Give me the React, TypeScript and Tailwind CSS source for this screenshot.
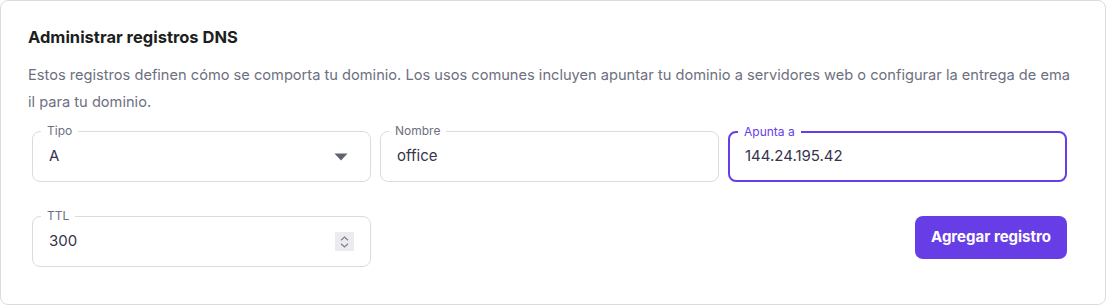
import type { ReactNode } from "react";

type FieldProps = {
  label: string;
  focused?: boolean;
  children: ReactNode;
};

function Field({ label, focused, children }: FieldProps) {
  return (
    <div
      className={`relative flex h-[51px] items-center rounded-lg bg-white ${
        focused ? "border-2 border-[#673de6] pl-[15px] pr-[15px]" : "border border-[#dadce2] pl-4 pr-4"
      }`}
    >
      <span
        className={`absolute left-[8px] top-[-9px] bg-white px-[6px] text-[12px] leading-[16px] ${
          focused ? "text-[#673de6]" : "text-[#6d7081]"
        }`}
      >
        {label}
      </span>
      {children}
    </div>
  );
}

function CaretDown() {
  return (
    <svg width="14" height="8" viewBox="0 0 14 8" className="shrink-0">
      <path d="M0.5 0.5h13L7 7.5z" fill="#5f6270" />
    </svg>
  );
}

function Spinner() {
  return (
    <div className="flex h-[19px] w-[19px] shrink-0 flex-col items-center justify-center gap-[2px] bg-[#ececf0]">
      <svg width="9" height="5" viewBox="0 0 9 5">
        <path d="M1 4.2L4.5 1 8 4.2" fill="none" stroke="#7c7f8c" strokeWidth="1.2" />
      </svg>
      <svg width="9" height="5" viewBox="0 0 9 5">
        <path d="M1 0.8L4.5 4 8 0.8" fill="none" stroke="#7c7f8c" strokeWidth="1.2" />
      </svg>
    </div>
  );
}

export default function App() {
  return (
    <div
      className="h-[305px] w-[1106px] bg-white"
      style={{ fontFamily: "Inter, 'Noto Sans', sans-serif" }}
    >
      <div className="h-full w-full rounded-lg border border-[#dadce0] px-[27px] pt-6">
        <h2 className="text-[16.5px] font-bold leading-6 text-[#1d1e20]">
          Administrar registros DNS
        </h2>
        <p className="mr-[7px] mt-[13px] break-all text-[14.63px] leading-[27px] text-[#6d7081]">
          Estos registros definen cómo se comporta tu dominio. Los usos comunes incluyen
          apuntar tu dominio a servidores web o configurar la entrega de email para tu
          dominio.
        </p>

        <div className="ml-1 mr-[11px] mt-[15px] grid grid-cols-3 gap-x-[9px] gap-y-[34px]">
          <Field label="Tipo">
            <span className="flex-1 text-[15px] text-[#36344d]">A</span>
            <span className="mr-[6px]">
              <CaretDown />
            </span>
          </Field>
          <Field label="Nombre">
            <span className="flex-1 text-[15px] text-[#36344d]">office</span>
          </Field>
          <Field label="Apunta a" focused>
            <span className="flex-1 text-[15px] text-[#36344d]">144.24.195.42</span>
          </Field>

          <Field label="TTL">
            <span className="flex-1 text-[15px] text-[#36344d]">300</span>
            <Spinner />
          </Field>
          <div />
          <div className="flex justify-end">
            <button className="h-[43px] w-[152px] rounded-lg bg-[#673de6] text-[15px] font-bold text-white">
              Agregar registro
            </button>
          </div>
        </div>
      </div>
    </div>
  );
}
